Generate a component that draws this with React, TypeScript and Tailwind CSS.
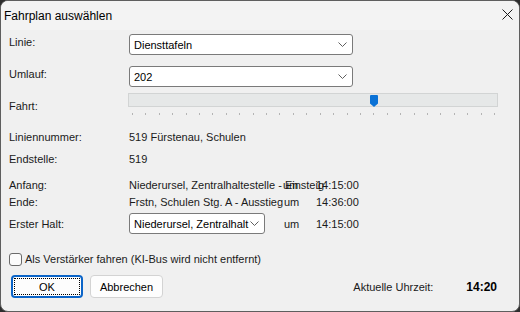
import React from 'react';

const font = { fontFamily: '"Liberation Sans", Arial, sans-serif' };

const Chevron = () => (
  <svg width="9" height="5" viewBox="0 0 9 5" className="shrink-0">
    <path d="M0.5 0.5 L4.5 4.5 L8.5 0.5" fill="none" stroke="#5f5f5f" strokeWidth="1" />
  </svg>
);

const Combo = ({ value, width }: { value: string; width: string }) => (
  <div
    className={`${width} h-[21px] shrink-0 flex items-center justify-between bg-white border border-[#7a7a7a] rounded-[3px] pl-[4px] pr-[5px] text-[11px] text-black overflow-hidden whitespace-nowrap`}
  >
    <span>{value}</span>
    <Chevron />
  </div>
);

const ticks = Array.from({ length: 28 });

const App = () => {
  return (
    <div className="w-[520px] h-[312px] bg-[#2d2d2d]" style={font}>
      <div className="h-full flex flex-col rounded-[8px] border border-[#5e5e5e] bg-[#f0f0f0] overflow-hidden text-[11px] leading-[16px] text-[#1a1a1a]">
        {/* title bar */}
        <div className="h-[29px] shrink-0 bg-[#f3f3f3] flex items-center justify-between pl-[3px] pr-[6px]">
          <span className="text-[12px] text-black">Fahrplan auswählen</span>
          <svg width="11" height="11" viewBox="0 0 11 11" className="mb-[3px]">
            <path d="M0.5 0.5 L10.5 10.5 M10.5 0.5 L0.5 10.5" stroke="#1a1a1a" strokeWidth="1" />
          </svg>
        </div>

        {/* body */}
        <div className="flex-1 flex flex-col pl-[8px]">
          <div className="flex mt-[4px] h-[21px]">
            <div className="w-[120px] shrink-0">Linie:</div>
            <Combo value="Diensttafeln" width="w-[224px]" />
          </div>

          <div className="flex mt-[11px] h-[21px]">
            <div className="w-[120px] shrink-0">Umlauf:</div>
            <Combo value="202" width="w-[224px]" />
          </div>

          <div className="flex mt-[6px]">
            <div className="w-[119px] shrink-0 pt-[5px]">Fahrt:</div>
            <div className="flex flex-col">
              <div className="relative w-[370px] h-[14px] bg-[#e6e8e8] border border-[#d2d4d4]">
                <svg width="8" height="12" viewBox="0 0 8 12" className="absolute left-[241px] top-[1px]">
                  <path d="M1 0 H7 Q8 0 8 1 V8.5 L4 12 L0 8.5 V1 Q0 0 1 0 Z" fill="#0a72d6" />
                </svg>
              </div>
              <div className="flex justify-between w-[363px] ml-[4px] mt-[6px]">
                {ticks.map((_, i) => (
                  <div key={i} className="w-[1px] h-[2px] bg-[#b4b4b4]" />
                ))}
              </div>
            </div>
          </div>

          <div className="flex mt-[14px]">
            <div className="w-[120px] shrink-0">Liniennummer:</div>
            <div>519 Fürstenau, Schulen</div>
          </div>

          <div className="flex mt-[6px]">
            <div className="w-[120px] shrink-0">Endstelle:</div>
            <div>519</div>
          </div>

          <div className="flex mt-[10px] whitespace-nowrap">
            <div className="w-[120px] shrink-0">Anfang:</div>
            <div className="w-[154px] shrink-0">Niederursel, Zentralhaltestelle - Einsteig</div>
            <div className="w-[33px] shrink-0">um</div>
            <div>14:15:00</div>
          </div>

          <div className="flex mt-[1px] whitespace-nowrap">
            <div className="w-[120px] shrink-0">Ende:</div>
            <div className="w-[155px] shrink-0">Frstn, Schulen Stg. A - Ausstieg</div>
            <div className="w-[32px] shrink-0">um</div>
            <div>14:36:00</div>
          </div>

          <div className="flex items-center mt-[3px] h-[21px] whitespace-nowrap">
            <div className="w-[120px] shrink-0">Erster Halt:</div>
            <Combo value="Niederursel, Zentralhalt" width="w-[136px]" />
            <div className="w-[19px] shrink-0" />
            <div className="w-[32px] shrink-0">um</div>
            <div>14:15:00</div>
          </div>

          <div className="flex items-center mt-[17px] h-[16px]">
            <div className="w-[13px] h-[13px] rounded-[3px] border border-[#6a6a6a] bg-[#fbfbfb] mr-[3px]" />
            <span>Als Verstärker fahren (KI-Bus wird nicht entfernt)</span>
          </div>

          <div className="flex items-center mt-[8px] h-[23px] pr-[22px]">
            <div className="ml-[2px] w-[72px] h-[23px] rounded-[4px] border-2 border-[#0a64c8] bg-[#fdfdfd] p-[1px]">
              <div className="h-full border border-dotted border-black flex items-center justify-center text-black">
                OK
              </div>
            </div>
            <div className="ml-[7px] w-[73px] h-[23px] rounded-[4px] border border-[#d3d3d3] bg-[#fdfdfd] flex items-center justify-center text-black">
              Abbrechen
            </div>
            <div className="ml-auto flex items-center">
              <span className="w-[113px]">Aktuelle Uhrzeit:</span>
              <span className="text-[12px] font-bold text-black">14:20</span>
            </div>
          </div>
        </div>
      </div>
    </div>
  );
};

export default App;
